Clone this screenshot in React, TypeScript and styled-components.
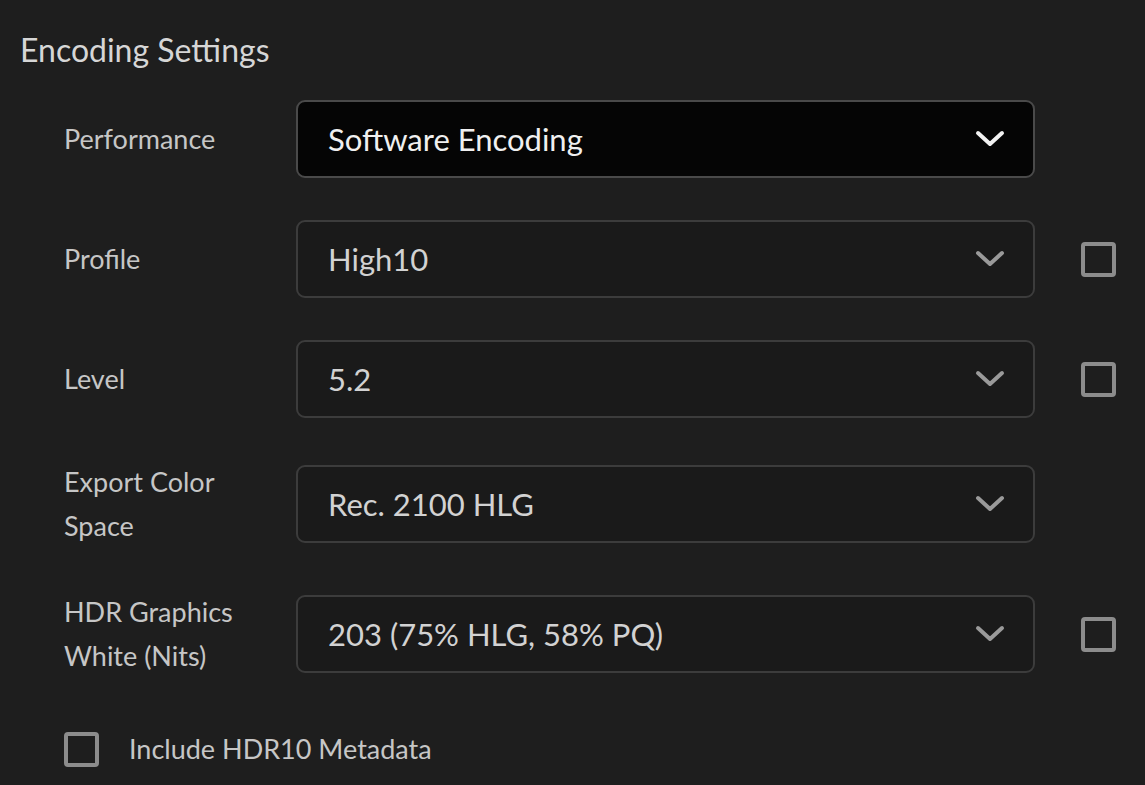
import React from "react";
import styled, { createGlobalStyle } from "styled-components";

const GlobalStyle = createGlobalStyle`
  html, body {
    margin: 0;
    padding: 0;
    background: #1e1e1e;
  }
  body {
    font-family: Lato, "Open Sans", sans-serif;
  }
`;

const Page = styled.div`
  width: 1145px;
  height: 785px;
  box-sizing: border-box;
  padding: 26px 0 0 20px;
  background: #1e1e1e;
  overflow: hidden;
`;

const Title = styled.h1`
  margin: 0 0 26px 0;
  font-size: 32px;
  line-height: 48px;
  font-weight: 400;
  color: #d6d6d6;
`;

const Form = styled.div`
  display: grid;
  grid-template-columns: 186px 739px 35px;
  column-gap: 46px;
  row-gap: 42px;
  margin-left: 44px;
  align-items: center;
`;

const Label = styled.div`
  font-size: 27px;
  line-height: 44px;
  color: #c6c6c6;
`;

interface SelectProps {
  $active?: boolean;
}

const Select = styled.div<SelectProps>`
  height: 78px;
  box-sizing: border-box;
  display: flex;
  align-items: center;
  justify-content: space-between;
  padding: 0 28px 0 30px;
  border: 2px solid ${p => (p.$active ? "#4a4a4a" : "#3c3c3c")};
  border-radius: 9px;
  background: ${p => (p.$active ? "#050505" : "#1a1a1a")};
  color: ${p => (p.$active ? "#f0f0f0" : "#d2d2d2")};
  font-size: 31px;
`;

const Box = styled.div`
  width: 35px;
  height: 35px;
  box-sizing: border-box;
  border: 4px solid #8c8c8c;
  border-radius: 4px;
`;

const CheckRow = styled.label`
  grid-column: 1 / span 3;
  display: flex;
  align-items: center;
  gap: 30px;
  margin-top: 7px;
  font-size: 27px;
  line-height: 44px;
  color: #c6c6c6;
`;

const Chevron = ({ active }: { active?: boolean }) => (
  <svg width="30" height="18" viewBox="0 0 30 18">
    <polyline
      points="3,3 15,14 27,3"
      fill="none"
      stroke={active ? "#f2f2f2" : "#9a9a9a"}
      strokeWidth="4"
      strokeLinecap="round"
      strokeLinejoin="round"
    />
  </svg>
);

type Row = { label: string; value: string; active?: boolean; check?: boolean };

const rows: Row[] = [
  { label: "Performance", value: "Software Encoding", active: true },
  { label: "Profile", value: "High10", check: true },
  { label: "Level", value: "5.2", check: true },
  { label: "Export Color Space", value: "Rec. 2100 HLG" },
  { label: "HDR Graphics White (Nits)", value: "203 (75% HLG, 58% PQ)", check: true },
];

export default function App() {
  return (
    <Page>
      <GlobalStyle />
      <Title>Encoding Settings</Title>
      <Form>
        {rows.map(r => (
          <React.Fragment key={r.label}>
            <Label>{r.label}</Label>
            <Select $active={r.active}>
              <span>{r.value}</span>
              <Chevron active={r.active} />
            </Select>
            {r.check ? <Box /> : <div />}
          </React.Fragment>
        ))}
        <CheckRow>
          <Box />
          Include HDR10 Metadata
        </CheckRow>
      </Form>
    </Page>
  );
}
